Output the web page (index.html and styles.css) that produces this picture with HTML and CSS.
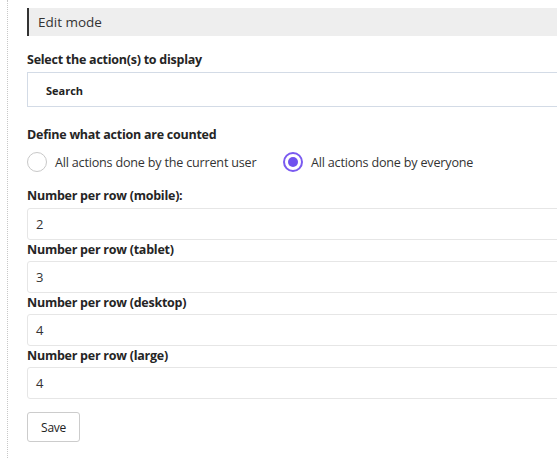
FILE: index.html
```html
<!DOCTYPE html>
<html>
<head>
<meta charset="utf-8">
<link rel="stylesheet" href="styles.css">
</head>
<body>
<div class="page">
  <div class="panel">
    <div class="header">Edit mode</div>
    <div class="label label-first">Select the action(s) to display</div>
    <div class="select-box">Search</div>
    <div class="label label-define">Define what action are counted</div>
    <div class="radios">
      <label class="radio"><span class="circle"></span><span>All actions done by the current user</span></label>
      <label class="radio"><span class="circle checked"></span><span>All actions done by everyone</span></label>
    </div>
    <div class="label label-num">Number per row (mobile):</div>
    <div class="input">2</div>
    <div class="label">Number per row (tablet)</div>
    <div class="input">3</div>
    <div class="label">Number per row (desktop)</div>
    <div class="input">4</div>
    <div class="label">Number per row (large)</div>
    <div class="input">4</div>
    <button class="save">Save</button>
  </div>
</div>
</body>
</html>
```

FILE: styles.css
```css
html, body {
  margin: 0;
  padding: 0;
  background: #ffffff;
  overflow: hidden;
}
body {
  font-family: "Open Sans", "Noto Sans", sans-serif;
  color: #222222;
}
.page {
  width: 700px;
  height: 458px;
  padding-left: 7px;
}
.panel {
  border-left: 1px dotted #c8c8c8;
  height: 458px;
  padding-left: 19px;
  box-sizing: border-box;
  padding-top: 8px;
}
.header {
  height: 28px;
  line-height: 28px;
  background: #eeeeee;
  border-left: 2px solid #333333;
  padding-left: 9px;
  font-size: 13.5px;
  color: #333333;
}
.label {
  font-size: 12.5px;
  font-weight: 700;
  line-height: 20px;
  height: 20px;
  color: #252525;
  letter-spacing: -0.25px;
}
.label-first {
  margin-top: 14px;
  margin-bottom: 2px;
}
.label-define {
  margin-top: 18px;
}
.label-num {
  margin-top: 14px;
}
.select-box {
  height: 35px;
  box-sizing: border-box;
  border: 1px solid #d3dbe6;
  padding-left: 18px;
  font-size: 11px;
  font-weight: 700;
  line-height: 35px;
  color: #222222;
}
.radios {
  display: flex;
  margin-top: 7px;
  height: 20px;
}
.radio {
  display: flex;
  align-items: center;
  gap: 8px;
  font-size: 12.6px;
  letter-spacing: -0.2px;
  color: #333333;
  width: 256px;
}
.circle {
  width: 20px;
  height: 20px;
  box-sizing: border-box;
  border: 1px solid #c8c8c8;
  border-radius: 50%;
  flex: none;
  position: relative;
}
.circle.checked {
  border: 2px solid #7a5af0;
}
.circle.checked::after {
  content: "";
  position: absolute;
  left: 3px;
  top: 3px;
  width: 10px;
  height: 10px;
  border-radius: 50%;
  background: #7051ee;
}
.input {
  margin-top: 1px;
  height: 32px;
  box-sizing: border-box;
  border: 1px solid #e6e6e6;
  border-radius: 3px;
  padding-left: 8px;
  font-size: 13px;
  line-height: 30px;
  color: #333333;
}
.label-num + .input {
  margin-top: 2px;
}
.save {
  margin-top: 13px;
  width: 53px;
  height: 30px;
  background: #ffffff;
  border: 1px solid #cccccc;
  border-radius: 3px;
  font-family: "Open Sans", "Noto Sans", sans-serif;
  font-size: 12px;
  letter-spacing: -0.3px;
  color: #222222;
  padding: 0;
}
```
